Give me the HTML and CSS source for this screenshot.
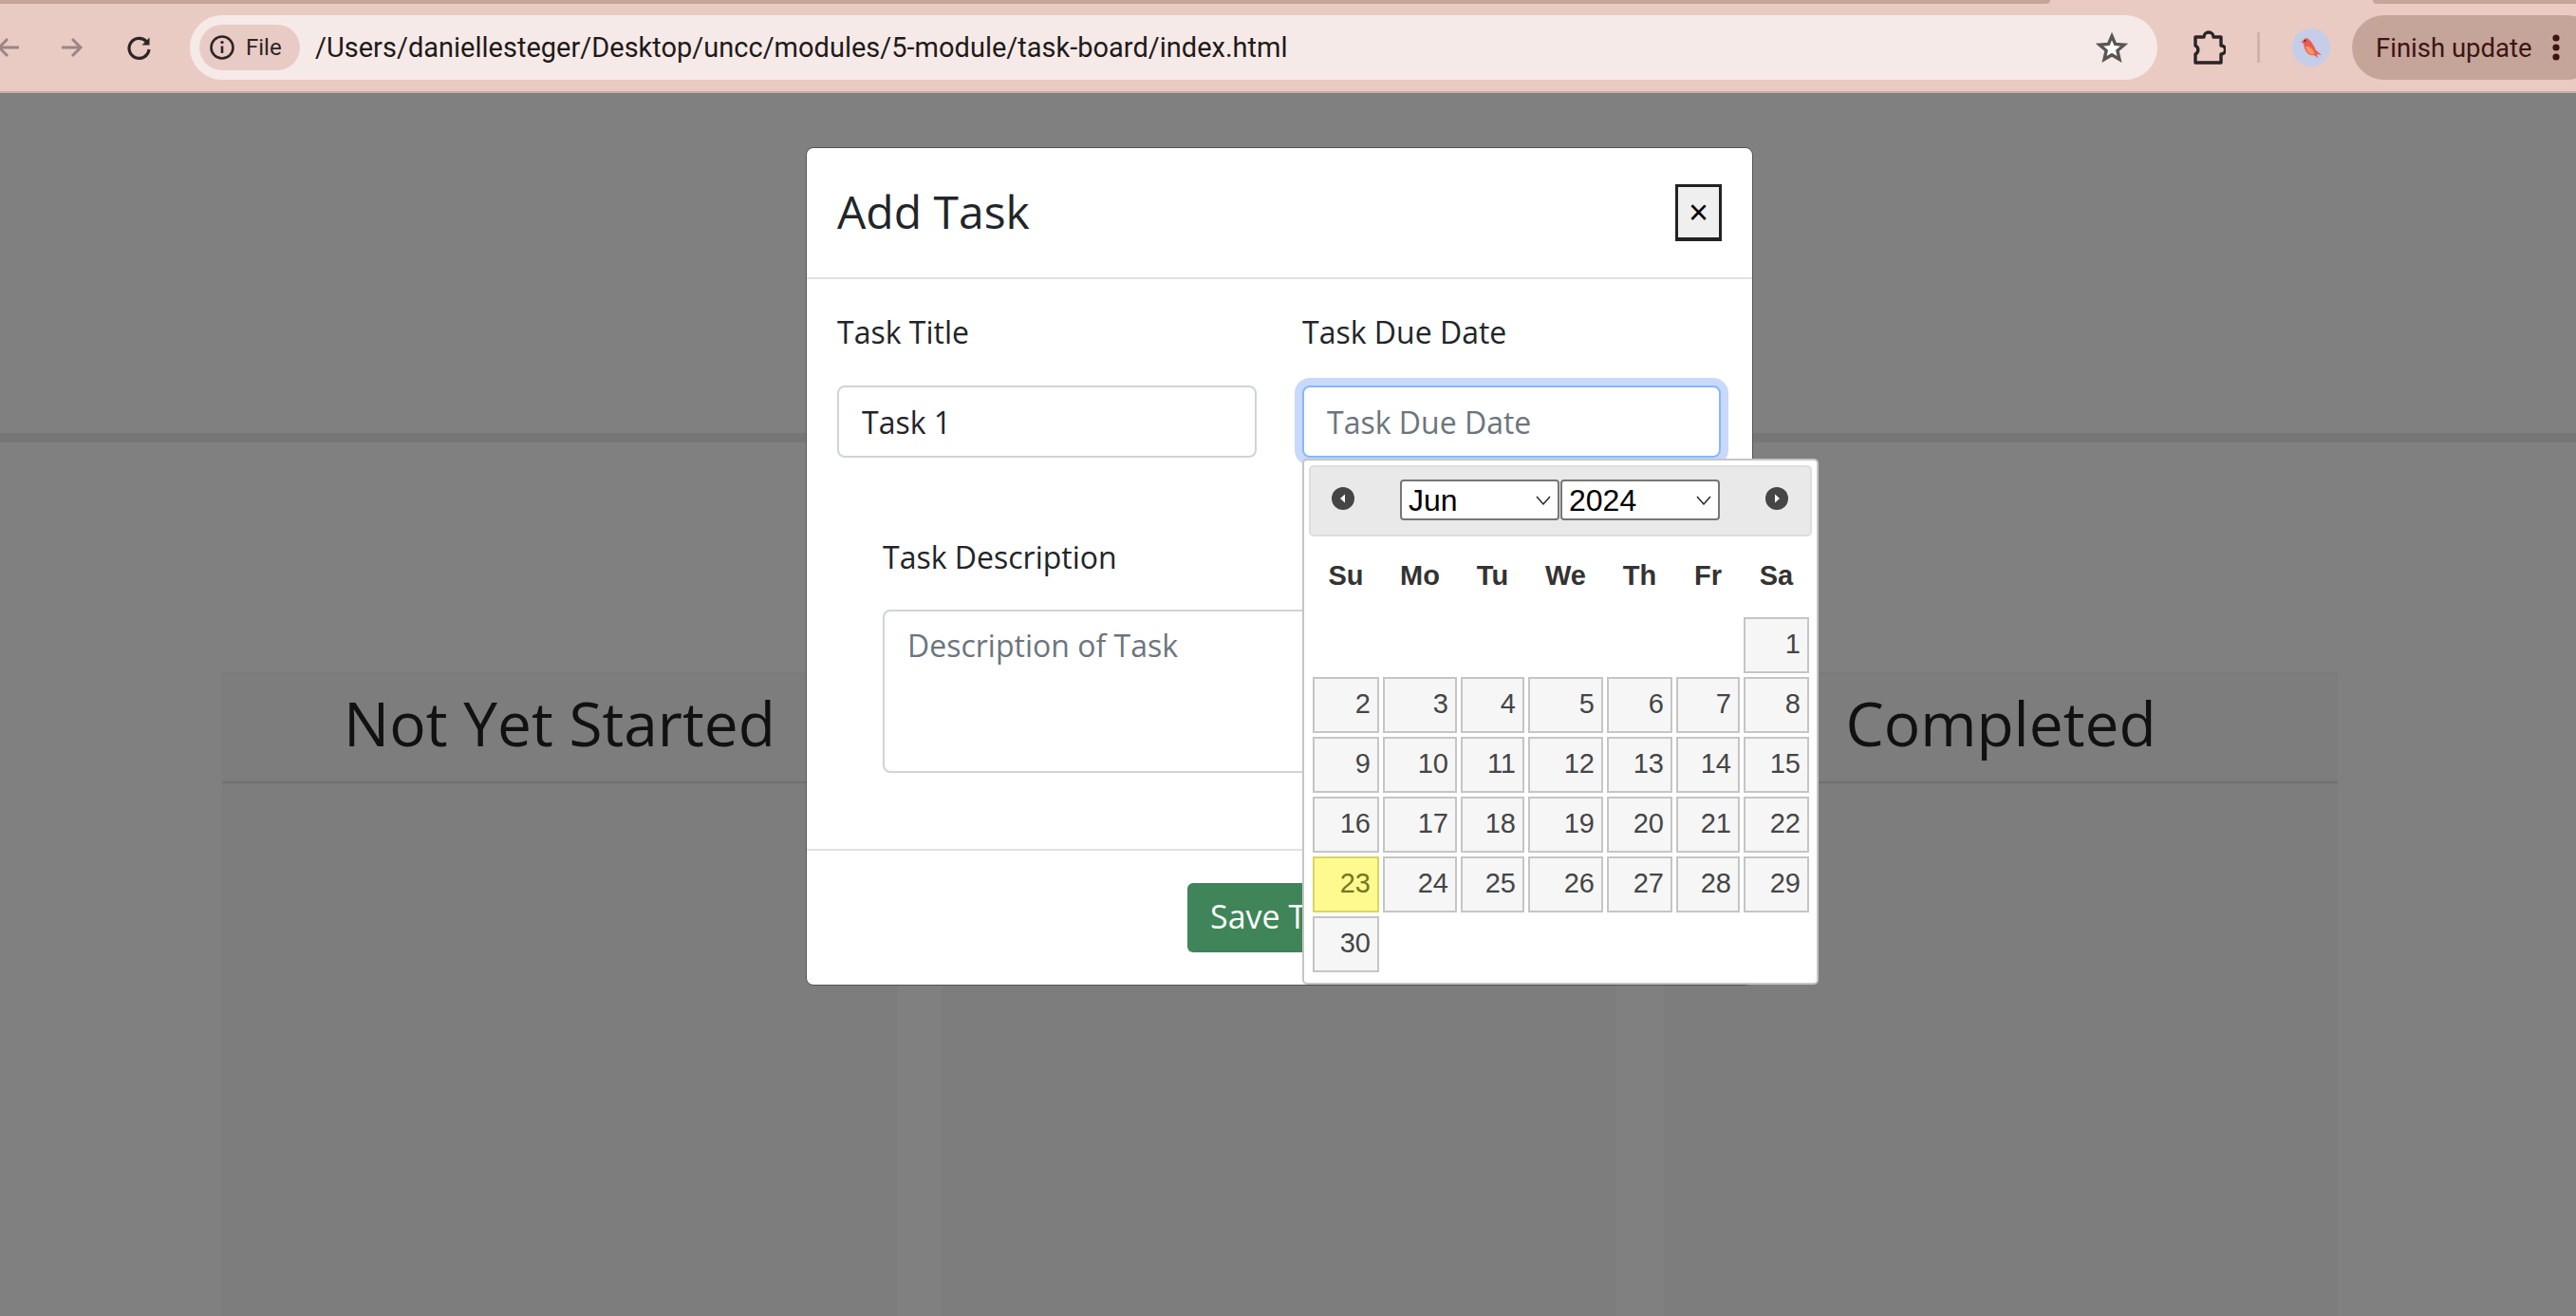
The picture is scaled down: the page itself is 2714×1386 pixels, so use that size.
FILE: index.html
```html
<!DOCTYPE html>
<html lang="en">
<head>
    <meta charset="UTF-8">
    <title>Task Board</title>
    <link rel="stylesheet" href="styles.css">
</head>
<body>

<div class="tab-strip">
    <div class="tab-left"></div>
    <div class="tab-right"></div>
</div>

<div class="toolbar">
    <svg class="nav-back" width="30" height="30" viewBox="0 0 30 30"><path d="M16 6 L7 15 L16 24 M7 15 H28" fill="none" stroke="#9a8683" stroke-width="3"/></svg>
    <svg class="nav-forward" width="30" height="30" viewBox="0 0 30 30"><path d="M14 6 L23 15 L14 24 M23 15 H3" fill="none" stroke="#9a8683" stroke-width="3"/></svg>
    <svg class="nav-reload" width="30" height="30" viewBox="0 0 30 30"><path d="M22.5 9 A10.5 10.5 0 1 0 25 17" fill="none" stroke="#2c2626" stroke-width="3.2"/><path d="M25.5 4.5 V12.5 H17.5 Z" fill="#2c2626"/></svg>
    <div class="url-bar">
        <div class="file-chip">
            <svg width="28" height="28" viewBox="0 0 28 28"><circle cx="14" cy="14" r="11.5" fill="none" stroke="#2c2626" stroke-width="2.6"/><path d="M14 12.5 V20" stroke="#2c2626" stroke-width="2.6"/><circle cx="14" cy="8.6" r="1.7" fill="#2c2626"/></svg>
            <span>File</span>
        </div>
        <div class="url-text">/Users/daniellesteger/Desktop/uncc/modules/5-module/task-board/index.html</div>
        <svg class="star" width="34" height="34" viewBox="0 0 34 34"><path d="M17 5 L20.6 13.4 L30 14.2 L22.9 20.3 L25 29.5 L17 24.7 L9 29.5 L11.1 20.3 L4 14.2 L13.4 13.4 Z" fill="#fff" stroke="#5b5655" stroke-width="3.4" stroke-linejoin="miter"/></svg>
    </div>
    <svg class="puzzle" width="36" height="38" viewBox="0 0 36 38"><path d="M4 8 H13 A5 5 0 0 1 23 8 H31 V17 A4.5 4.5 0 0 1 31 26 V35 H4 V26 A5 5 0 0 0 4 17 Z" fill="none" stroke="#2a2424" stroke-width="3.4" stroke-linejoin="round"/></svg>
    <div class="separator"></div>
    <div class="avatar">
        <svg width="24" height="24" viewBox="0 0 24 24"><path d="M1 5.5 L3 5.5 C4 2.5 7 1.5 9 3 C13 6 15 11 17 15 L23 20 L18 19 L19 23 L15 20 C9 21 5 16 4 8 Z" fill="#ec5a50"/><path d="M6 11 C10 10 14 13 15.5 19 C11 20.5 7 17 6 11 Z" fill="#f5975c"/><circle cx="5.5" cy="5" r="0.9" fill="#4a1614"/></svg>
    </div>
    <div class="update-pill">
        <span>Finish update</span>
        <svg width="10" height="30" viewBox="0 0 10 30"><circle cx="5" cy="5" r="3.6" fill="#3e1414"/><circle cx="5" cy="15" r="3.6" fill="#3e1414"/><circle cx="5" cy="25" r="3.6" fill="#3e1414"/></svg>
    </div>
</div>
<div class="toolbar-border"></div>

<div class="page">
    <div class="hero"></div>
    <div class="lanes">
        <div class="lane lane-1"><h2 class="lane-title">Not Yet Started</h2></div>
        <div class="lane lane-2"><div class="lane-title"></div></div>
        <div class="lane lane-3"><h2 class="lane-title">Completed</h2></div>
    </div>

    <div class="overlay">
        <div class="modal">
            <div class="modal-header">
                <h1 class="modal-title">Add Task</h1>
                <button class="close-button">×</button>
            </div>
            <div class="modal-body">
                <div class="form-row">
                    <div>
                        <label class="form-label">Task Title</label>
                        <input class="form-input" type="text" value="Task 1">
                    </div>
                    <div>
                        <label class="form-label">Task Due Date</label>
                        <input class="form-input focused" type="text" placeholder="Task Due Date">
                    </div>
                </div>
                <div class="description-group">
                    <label class="form-label">Task Description</label>
                    <textarea class="form-input description" placeholder="Description of Task"></textarea>
                </div>
            </div>
            <div class="modal-footer">
                <button class="save-button">Save Task</button>
            </div>

            <div class="datepicker">
                <div class="dp-header">
                    <svg class="dp-nav" width="26" height="26" viewBox="0 0 26 26"><circle cx="13" cy="13" r="12" fill="#454545"/><path d="M15 8.5 V17.5 L10 13 Z" fill="#fff"/></svg>
                    <div class="dp-selects">
                        <div class="dp-select-wrap">
                            <select class="dp-select"><option>Jun</option></select>
                            <svg class="dp-chevron" width="16" height="10" viewBox="0 0 16 10"><path d="M1 1 L8 9 L15 1" fill="none" stroke="#222" stroke-width="1.4"/></svg>
                        </div>
                        <div class="dp-select-wrap">
                            <select class="dp-select"><option>2024</option></select>
                            <svg class="dp-chevron" width="16" height="10" viewBox="0 0 16 10"><path d="M1 1 L8 9 L15 1" fill="none" stroke="#222" stroke-width="1.4"/></svg>
                        </div>
                    </div>
                    <svg class="dp-nav" width="26" height="26" viewBox="0 0 26 26"><circle cx="13" cy="13" r="12" fill="#454545"/><path d="M11 8.5 V17.5 L16 13 Z" fill="#fff"/></svg>
                </div>
                <div class="dp-grid">
                    <div class="dp-name">Su</div>
                    <div class="dp-name">Mo</div>
                    <div class="dp-name">Tu</div>
                    <div class="dp-name">We</div>
                    <div class="dp-name">Th</div>
                    <div class="dp-name">Fr</div>
                    <div class="dp-name">Sa</div>

                    <div class="dp-day first-day">1</div>
                    <div class="dp-day">2</div>
                    <div class="dp-day">3</div>
                    <div class="dp-day">4</div>
                    <div class="dp-day">5</div>
                    <div class="dp-day">6</div>
                    <div class="dp-day">7</div>
                    <div class="dp-day">8</div>
                    <div class="dp-day">9</div>
                    <div class="dp-day">10</div>
                    <div class="dp-day">11</div>
                    <div class="dp-day">12</div>
                    <div class="dp-day">13</div>
                    <div class="dp-day">14</div>
                    <div class="dp-day">15</div>
                    <div class="dp-day">16</div>
                    <div class="dp-day">17</div>
                    <div class="dp-day">18</div>
                    <div class="dp-day">19</div>
                    <div class="dp-day">20</div>
                    <div class="dp-day">21</div>
                    <div class="dp-day">22</div>
                    <div class="dp-day today">23</div>
                    <div class="dp-day">24</div>
                    <div class="dp-day">25</div>
                    <div class="dp-day">26</div>
                    <div class="dp-day">27</div>
                    <div class="dp-day">28</div>
                    <div class="dp-day">29</div>
                    <div class="dp-day">30</div>
                </div>
            </div>
        </div>
    </div>
</div>

</body>
</html>
```

FILE: styles.css
```css
* {
    box-sizing: border-box;
}
html, body {
    height: 100%;
}
body {
    margin: 0;
    display: flex;
    flex-direction: column;
    overflow: hidden;
    background-color: #808080;
    font-family: "Open Sans", "Noto Sans", sans-serif;
}

/* browser chrome */
.tab-strip {
    display: flex;
    justify-content: space-between;
    height: 4px;
    background-color: #e9cbc4;
}
.tab-left {
    width: 2160px;
    background-color: #c5a599;
    border-radius: 0 0 8px 0;
}
.tab-right {
    width: 214px;
    background-color: #c5a599;
    border-radius: 0 0 0 8px;
}
.toolbar {
    display: flex;
    align-items: center;
    height: 92px;
    background-color: #e9cbc4;
    overflow: hidden;
}
.toolbar-border {
    height: 2px;
    background-color: #c9aea6;
}
.nav-back {
    margin-left: -8px;
    flex: none;
}
.nav-forward {
    margin-left: 40px;
    flex: none;
}
.nav-reload {
    margin-left: 40px;
    flex: none;
}
.url-bar {
    display: flex;
    align-items: center;
    width: 2073px;
    height: 68px;
    margin-left: 38px;
    padding: 0 31px 0 10px;
    background-color: #f6eae8;
    border-radius: 34px;
    flex: none;
}
.file-chip {
    display: flex;
    align-items: center;
    gap: 11px;
    width: 106px;
    height: 48px;
    padding-left: 10px;
    background-color: #e8cbc4;
    border-radius: 24px;
    color: #2c2626;
    font-family: Roboto, sans-serif;
    font-size: 24px;
}
.url-text {
    flex: 1;
    margin-left: 16px;
    color: #1f1a1a;
    font-family: Roboto, sans-serif;
    font-size: 29px;
}
.puzzle {
    margin-left: 36px;
    flex: none;
}
.separator {
    width: 3px;
    height: 32px;
    margin-left: 33px;
    background-color: #d2b1a8;
    flex: none;
}
.avatar {
    display: flex;
    align-items: center;
    justify-content: center;
    width: 40px;
    height: 40px;
    margin-left: 34px;
    background-color: #c5cde8;
    border-radius: 50%;
    flex: none;
}
.update-pill {
    display: flex;
    align-items: center;
    gap: 20px;
    width: 260px;
    height: 68px;
    margin-left: 23px;
    padding-left: 25px;
    background-color: #c5a599;
    border-radius: 34px;
    color: #3e1414;
    font-family: Roboto, sans-serif;
    font-size: 27.5px;
    flex: none;
}

/* page behind the backdrop */
.page {
    position: relative;
    flex: 1;
    overflow: hidden;
}
.hero {
    height: 368px;
    border-bottom: 10px solid #767676;
}
.lanes {
    display: flex;
    margin-top: 242px;
    padding-left: 234px;
}
.lane {
    width: 711px;
    height: 700px;
    background-color: #7d7d7d;
}
.lane-2 {
    margin-left: 47px;
}
.lane-3 {
    margin-left: 50px;
    width: 710px;
}
.lane-title {
    height: 117px;
    margin: 0;
    border-top: 1px solid #7a7a7a;
    border-bottom: 2px solid #707070;
    color: #111;
    font-size: 64px;
    font-weight: 400;
    line-height: 106px;
    text-align: center;
}

/* modal */
.overlay {
    position: absolute;
    top: 0;
    left: 0;
    right: 0;
    bottom: 0;
    padding: 57px 0 0 849px;
}
.modal {
    position: relative;
    width: 998px;
    height: 883px;
    background-color: #fff;
    border: 1px solid #555;
    border-radius: 8px;
    color: #212529;
}
.modal-header {
    display: flex;
    align-items: center;
    justify-content: space-between;
    height: 138px;
    padding: 0 32px 0 32px;
    border-bottom: 2px solid #dee2e6;
}
.modal-title {
    margin: 0 0 3px;
    font-size: 48px;
    font-weight: 400;
}
.close-button {
    width: 49px;
    height: 60px;
    padding: 0;
    background-color: #efefef;
    border: 3px solid #222;
    border-bottom-width: 4px;
    color: #000;
    font-family: "Liberation Sans", sans-serif;
    font-size: 36px;
}
.modal-body {
    height: 602px;
    padding: 32px 32px 0;
    border-bottom: 2px solid #dee2e6;
}
.form-row {
    display: grid;
    grid-template-columns: 442px 441px;
    gap: 48px;
}
.form-label {
    display: block;
    height: 48px;
    margin-bottom: 32px;
    font-size: 32px;
    line-height: 48px;
}
.form-input {
    display: block;
    width: 100%;
    height: 76px;
    padding: 0 24px;
    background-color: #fff;
    border: 2px solid #ced4da;
    border-radius: 8px;
    color: #212529;
    font-family: inherit;
    font-size: 32px;
    outline: none;
}
.form-input::placeholder {
    color: #6c757d;
    opacity: 1;
}
.form-input.focused {
    border-color: #86b7fe;
    box-shadow: 0 0 0 8px #c9d9fb;
}
.description-group {
    margin-top: 81px;
    padding: 0 48px;
}
.description-group .form-label {
    margin-bottom: 31px;
}
.description {
    height: 172px;
    padding: 14px 24px;
    resize: none;
}
.modal-footer {
    padding: 34px 0 0 401px;
}
.save-button {
    height: 73px;
    padding: 0 24px 3px;
    background-color: #3f8559;
    border: none;
    border-radius: 6px;
    color: #fff;
    font-family: inherit;
    font-size: 34px;
}

/* date picker */
.datepicker {
    position: absolute;
    left: 522px;
    top: 327px;
    width: 544px;
    height: 554px;
    padding: 5px;
    background-color: #fff;
    border: 2px solid #c5c5c5;
    border-radius: 5px;
    font-family: "Liberation Sans", Arial, sans-serif;
}
.dp-header {
    display: flex;
    align-items: center;
    justify-content: space-between;
    height: 75px;
    padding: 0 22px 0 21px;
    background-color: #e9e9e9;
    border: 2px solid #ddd;
    border-radius: 5px;
}
.dp-nav {
    margin-top: -5px;
}
.dp-selects {
    display: flex;
    gap: 1px;
    margin-top: -2px;
}
.dp-select-wrap {
    position: relative;
}
.dp-select {
    display: block;
    width: 168px;
    height: 43px;
    padding: 0 7px;
    appearance: none;
    background-color: #fff;
    border: 2px solid #767676;
    border-radius: 4px;
    color: #000;
    font-family: inherit;
    font-size: 32px;
    outline: none;
}
.dp-chevron {
    position: absolute;
    right: 9px;
    top: 17px;
}
.dp-grid {
    display: grid;
    grid-template-columns: 70px 78px 67px 79px 69px 67px 69px;
    gap: 4px;
    padding: 25px 2px 0 4px;
}
.dp-name {
    height: 32px;
    margin-bottom: 24px;
    color: #333;
    font-size: 29px;
    font-weight: bold;
    line-height: 32px;
    text-align: center;
}
.dp-day {
    height: 59px;
    padding-right: 7px;
    background-color: #f6f6f6;
    border: 2px solid #c5c5c5;
    color: #454545;
    font-size: 29px;
    line-height: 53px;
    text-align: right;
}
.dp-day.first-day {
    grid-column: 7;
}
.dp-day.today {
    background-color: #fffa90;
    border-color: #dad55e;
    color: #777620;
}
```
